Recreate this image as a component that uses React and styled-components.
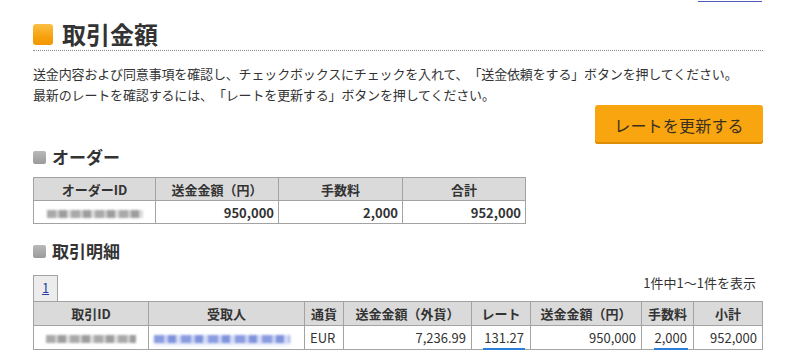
import React from "react";
import styled, { createGlobalStyle, css } from "styled-components";

const Global = createGlobalStyle`
  html, body { margin: 0; padding: 0; background: #fff; }
  body {
    font-family: "Noto Sans CJK JP", "Noto Sans", sans-serif;
    color: #333;
    width: 800px;
    height: 355px;
    overflow: hidden;
    text-spacing-trim: space-all;
  }
`;

const Page = styled.div`
  width: 730px;
  padding: 0 37px 0 33px;
  display: flex;
  flex-direction: column;
`;

const TopBar = styled.div`
  display: flex;
  justify-content: flex-end;
  height: 2px;
  overflow: hidden;
  align-items: flex-end;
  padding-right: 1px;
`;

const TopLink = styled.a`
  display: block;
  width: 64px;
  height: 1px;
  border-bottom: 1px solid #4a5cb5;
`;

const MainHeading = styled.h1`
  display: flex;
  align-items: center;
  gap: 9px;
  margin: 20px 0 0;
  padding-bottom: 4px;
  font-size: 24px;
  line-height: 24px;
  font-weight: 700;
  color: #333;
  border-bottom: 1px dotted #8a8a8a;
`;

const OrangeMark = styled.span`
  width: 20px;
  height: 21px;
  border-radius: 3px;
  background: linear-gradient(180deg, #fbbf45 0%, #f6a20e 60%, #f19800 100%);
  flex: none;
`;

const Lead = styled.p`
  margin: 12px 0 0;
  font-size: 13px;
  line-height: 21px;
  letter-spacing: -0.15px;
  color: #333;
`;

const ButtonRow = styled.div`
  display: flex;
  justify-content: flex-end;
`;

const UpdateButton = styled.button`
  width: 168px;
  height: 39px;
  border: none;
  border-radius: 3px;
  background: #f9a50f;
  box-shadow: inset 0 -2px 0 #dd8c05;
  color: #3a3020;
  font-family: inherit;
  font-size: 16px;
  letter-spacing: 0.2px;
  cursor: pointer;
`;

const SubHeading = styled.h2`
  display: flex;
  align-items: center;
  gap: 6px;
  margin: ${(p) => p.$top}px 0 0;
  font-size: 17px;
  line-height: 20px;
  font-weight: 700;
  color: #333;
`;

const GreyMark = styled.span`
  width: 13px;
  height: 13px;
  border-radius: 2px;
  background: linear-gradient(180deg, #b9b9b9 0%, #9a9a9a 100%);
  flex: none;
`;

const Table = styled.table`
  border-collapse: collapse;
  table-layout: fixed;
  width: ${(p) => p.$width}px;
  margin-top: ${(p) => p.$top || 0}px;
  font-size: 13px;
`;

const Th = styled.th`
  background: #dadada;
  border: 1px solid #a3a3a3;
  height: ${(p) => p.$h}px;
  padding: 0 4px;
  font-weight: 700;
  text-align: center;
  color: #333;
  white-space: nowrap;
`;

const Td = styled.td`
  border: 1px solid #a3a3a3;
  height: ${(p) => p.$h}px;
  padding: 0 ${(p) => (p.$bold ? 4 : 5)}px 0 5px;
  text-align: ${(p) => p.$align || "right"};
  font-weight: ${(p) => (p.$bold ? 700 : 400)};
  color: #333;
  white-space: nowrap;
`;

const Redacted = styled.span`
  display: inline-block;
  vertical-align: middle;
  width: ${(p) => p.$w}px;
  height: 8px;
  filter: blur(1.2px);
  ${(p) =>
    p.$blue
      ? css`
          background: repeating-linear-gradient(
            90deg,
            #8a9ce0 0 10px,
            #c6cff2 10px 14px,
            #7f93dc 14px 22px,
            #d3daf5 22px 27px
          );
          box-shadow: 0 2px 3px #dfe5fa;
        `
      : css`
          background: repeating-linear-gradient(
            90deg,
            #a9a9a9 0 9px,
            #d0d0d0 9px 12px,
            #9d9d9d 12px 20px,
            #dadada 20px 24px
          );
        `}
`;

const RateLink = styled.span`
  border-bottom: 2px solid #2c7fd6;
  padding: 0 1px 1px;
`;

const PagerRow = styled.div`
  display: flex;
  justify-content: space-between;
  align-items: flex-end;
  margin-top: 12px;
  width: 729px;
`;

const PageTab = styled.div`
  width: 23px;
  height: 25px;
  border: 1px solid #a3a3a3;
  border-bottom: none;
  background: #ececec;
  font-size: 13px;
  line-height: 24px;
  display: flex;
  justify-content: center;
`;

const PageLink = styled.a`
  color: #2a3ea8;
  text-decoration: underline;
  font-size: 13px;
`;

const Count = styled.div`
  font-size: 13px;
  line-height: 20px;
  margin-bottom: 8px;
  padding-right: 6px;
  color: #333;
`;

export default function App() {
  return (
    <>
      <Global />
      <Page>
        <TopBar>
          <TopLink href="#" />
        </TopBar>
        <MainHeading>
          <OrangeMark />
          取引金額
        </MainHeading>
        <Lead>
          送金内容および同意事項を確認し、チェックボックスにチェックを入れて、「送金依頼をする」ボタンを押してください。
          <br />
          最新のレートを確認するには、「レートを更新する」ボタンを押してください。
        </Lead>
        <ButtonRow>
          <UpdateButton>レートを更新する</UpdateButton>
        </ButtonRow>

        <SubHeading $top={3}>
          <GreyMark />
          オーダー
        </SubHeading>
        <Table $width={492} $top={10}>
          <colgroup>
            <col style={{ width: 122 }} />
            <col style={{ width: 123 }} />
            <col style={{ width: 124 }} />
            <col style={{ width: 123 }} />
          </colgroup>
          <thead>
            <tr>
              <Th $h={22}>オーダーID</Th>
              <Th $h={22}>送金金額（円）</Th>
              <Th $h={22}>手数料</Th>
              <Th $h={22}>合計</Th>
            </tr>
          </thead>
          <tbody>
            <tr>
              <Td $h={22} $align="center">
                <Redacted $w={96} />
              </Td>
              <Td $h={22} $bold>950,000</Td>
              <Td $h={22} $bold>2,000</Td>
              <Td $h={22} $bold>952,000</Td>
            </tr>
          </tbody>
        </Table>

        <SubHeading $top={17}>
          <GreyMark />
          取引明細
        </SubHeading>
        <PagerRow>
          <PageTab>
            <PageLink href="#">1</PageLink>
          </PageTab>
          <Count>1件中1～1件を表示</Count>
        </PagerRow>
        <Table $width={729}>
          <colgroup>
            <col style={{ width: 115 }} />
            <col style={{ width: 156 }} />
            <col style={{ width: 39 }} />
            <col style={{ width: 128 }} />
            <col style={{ width: 59 }} />
            <col style={{ width: 111 }} />
            <col style={{ width: 52 }} />
            <col style={{ width: 69 }} />
          </colgroup>
          <thead>
            <tr>
              <Th $h={23}>取引ID</Th>
              <Th $h={23}>受取人</Th>
              <Th $h={23}>通貨</Th>
              <Th $h={23}>送金金額（外貨）</Th>
              <Th $h={23}>レート</Th>
              <Th $h={23}>送金金額（円）</Th>
              <Th $h={23}>手数料</Th>
              <Th $h={23}>小計</Th>
            </tr>
          </thead>
          <tbody>
            <tr>
              <Td $h={23} $align="center">
                <Redacted $w={90} />
              </Td>
              <Td $h={23} $align="left">
                <Redacted $w={136} $blue />
              </Td>
              <Td $h={23} $align="left">EUR</Td>
              <Td $h={23}>7,236.99</Td>
              <Td $h={23}>
                <RateLink>131.27</RateLink>
              </Td>
              <Td $h={23}>950,000</Td>
              <Td $h={23}>
                <RateLink>2,000</RateLink>
              </Td>
              <Td $h={23}>952,000</Td>
            </tr>
          </tbody>
        </Table>
      </Page>
    </>
  );
}
